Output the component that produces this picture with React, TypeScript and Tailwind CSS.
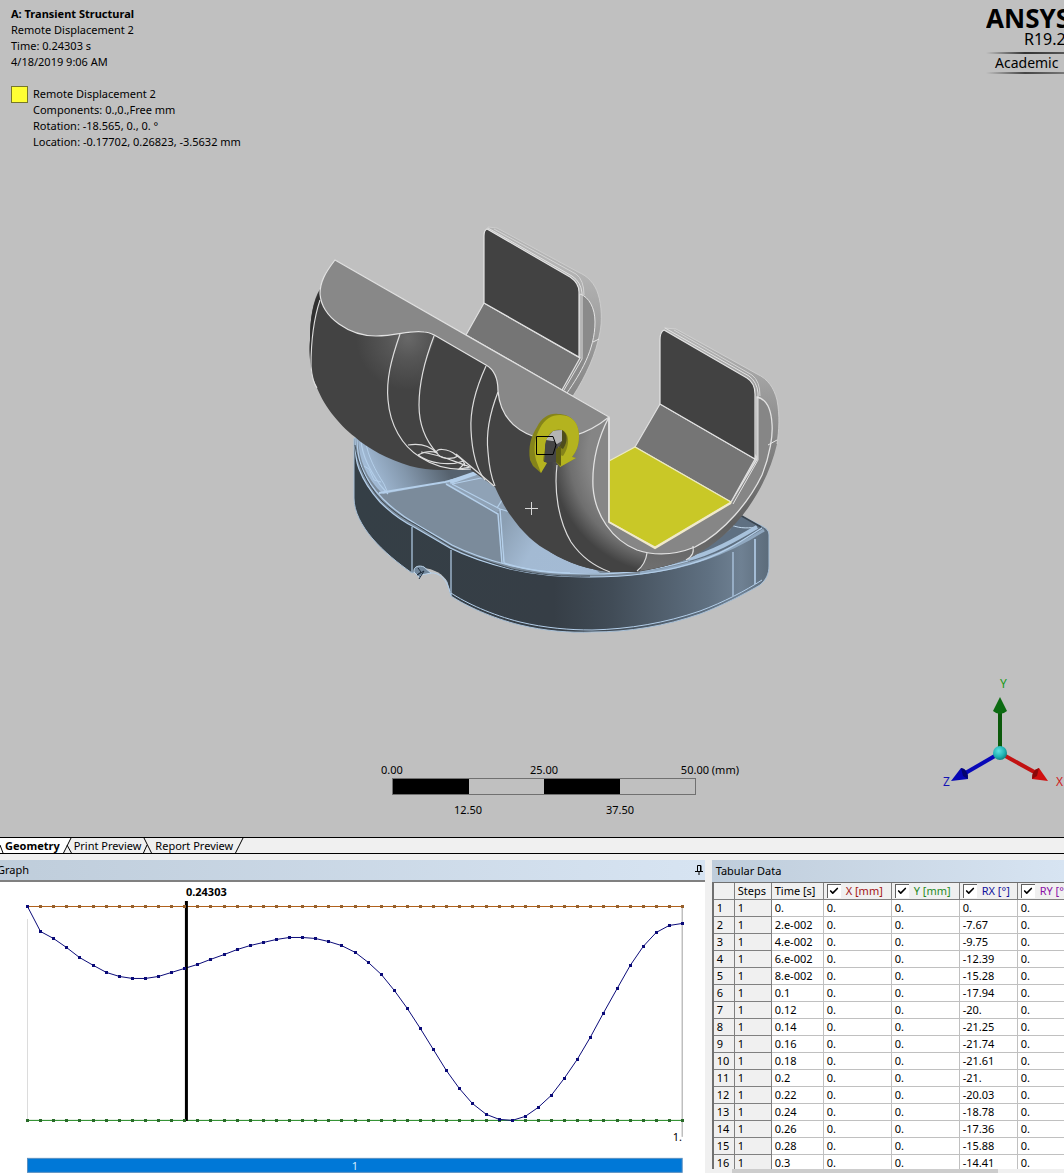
import React, { useState } from 'react';
import { Check } from 'lucide-react';

interface Row {
  time: string;
  rx: string;
}

const rows: Row[] = [
  { time: '0.', rx: '0.' },
  { time: '2.e-002', rx: '-7.67' },
  { time: '4.e-002', rx: '-9.75' },
  { time: '6.e-002', rx: '-12.39' },
  { time: '8.e-002', rx: '-15.28' },
  { time: '0.1', rx: '-17.94' },
  { time: '0.12', rx: '-20.' },
  { time: '0.14', rx: '-21.25' },
  { time: '0.16', rx: '-21.74' },
  { time: '0.18', rx: '-21.61' },
  { time: '0.2', rx: '-21.' },
  { time: '0.22', rx: '-20.03' },
  { time: '0.24', rx: '-18.78' },
  { time: '0.26', rx: '-17.36' },
  { time: '0.28', rx: '-15.88' },
  { time: '0.3', rx: '-14.41' },
];

const channels = [
  { id: 'x', label: 'X [mm]', color: 'text-[#a31515]' },
  { id: 'y', label: 'Y [mm]', color: 'text-[#1f8a1f]' },
  { id: 'rx', label: 'RX [°]', color: 'text-[#10109c]' },
  { id: 'ry', label: 'RY [°]', color: 'text-[#8a10a8]' },
];

// depth of the rotation curve below the zero line, one entry per time step
const curve = [
  0, 25, 32, 41, 51, 59, 66, 70, 72, 72, 70, 66, 62, 58, 53, 48, 43, 39, 36, 33, 31, 31, 32, 35, 39, 46, 56, 68, 84,
  102, 122, 143, 164, 182, 197, 208, 213, 214, 210, 201, 189, 172, 153, 131, 107, 82, 59, 40, 26, 19, 17,
];

const stepX = (i: number) => Math.round(27 + i * 13.1);

const Annotation = () => (
  <div className="pl-[11px] text-[11px] leading-4">
    <div className="font-bold">A: Transient Structural</div>
    <div>Remote Displacement 2</div>
    <div>Time: 0.24303 s</div>
    <div>4/18/2019 9:06 AM</div>
    <div className="mt-4 flex gap-[5px]">
      <span className="h-[17px] w-[17px] border border-[#77772a] bg-[#ffff33]" />
      <div>
        <div>Remote Displacement 2</div>
        <div>Components: 0.,0.,Free mm</div>
        <div>Rotation: -18.565, 0., 0. °</div>
        <div>Location: -0.17702, 0.26823, -3.5632 mm</div>
      </div>
    </div>
  </div>
);

const Logo = () => (
  <div className="w-[78px] overflow-hidden whitespace-nowrap">
    <div className="text-[26px] font-bold leading-6">ANSYS</div>
    <div className="pl-[38px] text-[16px] leading-[18px]">R19.2</div>
    <div className="mt-1 h-[2px] bg-linear-to-r from-transparent via-[#333] to-[#555]" />
    <div className="pl-[9px] text-[14px] leading-[18px]">Academic</div>
    <div className="h-[2px] bg-linear-to-r from-transparent via-[#444] to-[#777]" />
  </div>
);

const Model = () => (
  <svg viewBox="304 222 480 420" className="mx-auto h-[420px] w-[480px]" fill="none">
    <defs>
      <linearGradient id="side" gradientUnits="userSpaceOnUse" x1="354" y1="0" x2="770" y2="0">
        <stop offset="0" stopColor="#353f46" />
        <stop offset="0.48" stopColor="#363e46" />
        <stop offset="0.62" stopColor="#414c57" />
        <stop offset="0.85" stopColor="#5f7081" />
        <stop offset="0.93" stopColor="#6f8193" />
        <stop offset="1" stopColor="#5b6b7a" />
      </linearGradient>
      <linearGradient id="bowlLeft" gradientUnits="userSpaceOnUse" x1="370" y1="490" x2="440" y2="455">
        <stop offset="0" stopColor="#a9c3df" />
        <stop offset="0.5" stopColor="#8397ac" />
        <stop offset="1" stopColor="#56626e" />
      </linearGradient>
      <linearGradient id="bowlRight" gradientUnits="userSpaceOnUse" x1="505" y1="520" x2="600" y2="575">
        <stop offset="0" stopColor="#8b9fb3" />
        <stop offset="0.35" stopColor="#a3bad3" />
        <stop offset="1" stopColor="#a4bbd5" />
      </linearGradient>
      <radialGradient id="roller" gradientUnits="userSpaceOnUse" cx="670" cy="455" r="132">
        <stop offset="0.62" stopColor="#858585" />
        <stop offset="0.76" stopColor="#6f6f6f" />
        <stop offset="0.9" stopColor="#434343" />
      </radialGradient>
      <radialGradient id="sheen" gradientUnits="userSpaceOnUse" cx="408" cy="338" r="52">
        <stop offset="0" stopColor="#686868" />
        <stop offset="0.4" stopColor="#565656" />
        <stop offset="1" stopColor="#434343" />
      </radialGradient>
      <linearGradient id="band" gradientUnits="userSpaceOnUse" x1="0" y1="340" x2="0" y2="570">
        <stop offset="0" stopColor="#b4b4b4" />
        <stop offset="0.35" stopColor="#8f8f8f" />
        <stop offset="0.8" stopColor="#606060" />
        <stop offset="1" stopColor="#6f6f6f" />
      </linearGradient>
      <linearGradient id="bandBack" gradientUnits="userSpaceOnUse" x1="0" y1="270" x2="0" y2="395">
        <stop offset="0" stopColor="#b4b4b4" />
        <stop offset="1" stopColor="#868686" />
      </linearGradient>
    </defs>

    {/* tray */}
    <path
      d="M354 438V498C354 512 362 526 372 538C384 552 398 563 412 573C424 566 442 572 447 582L451 596C466 606 492 618 520 625C545 631 570 633 592 632C630 632 665 626 700 614C724 605 750 591 760 585C766 580 769 574 769 566V535C769 529 764 527 758 524L740 515L600 470L400 440Z"
      fill="url(#side)"
      stroke="#a9c1d8"
      strokeWidth="1"
    />
    <path
      d="M355 438C355 452 356 462 359 469C364 482 371 492 380 502C391 513 402 521 414 527L450 548C470 558 490 564 510 569C540 576 565 577 590 577C630 577 660 573 690 564C720 556 742 541 762 528L740 515L600 460Z"
      fill="#7b8b9b"
    />
    <path d="M358 438C359 460 366 478 383 494L444 483L490 472L440 466L370 440Z" fill="url(#bowlLeft)" />
    <path d="M444 483L490 472L507 508L497 512Z" fill="#8fa2b6" />
    <path d="M501 508C502 530 504 550 504 563C530 571 560 575 600 573L560 545L520 508Z" fill="url(#bowlRight)" />
    <path d="M690 559L730 530L740 515L762 527C740 542 722 553 690 562Z" fill="#5f7082" />
    <path d="M740 515L761 527" stroke="#39444f" strokeWidth="1.500" />
    <path d="M731 525C741 529 750 528 757 527" stroke="#c4daee" />
    <path d="M688 559C712 553 735 540 757 527" stroke="#a8c2dc" strokeWidth="4" />
    <path d="M640 573C680 569 722 557 764 530" stroke="#90a8c0" strokeWidth="3" />
    <g stroke="#b4cfea" strokeWidth="1.200">
      <path d="M355 438C355 452 356 462 359 469C364 482 371 492 380 502C391 513 402 521 414 527L450 548C470 558 490 564 510 569C540 576 565 577 590 577C630 577 660 573 690 564C720 556 742 541 762 528" />
      <path d="M357 438C357 452 359 460 362 468C367 480 374 490 383 499C394 510 404 517 416 524L452 545C472 555 492 561 512 566C540 572 565 574 590 574C630 574 655 570 688 561" />
      <path d="M361 440C362 456 370 470 380 485L388 494" />
      <path d="M366 443C368 456 375 470 384 484L387 491" strokeWidth="1" />
      <path d="M364 466L369 469L374 480L381 482" strokeWidth="1" />
      <path d="M379 493L445 482L484 472" strokeWidth="2" />
      <path d="M446 484L498 514L502 563" strokeWidth="1.500" />
      <path d="M452 484L500 509L510 512" />
      <path d="M452 484L486 477" />
      <path d="M450 482L482 471" strokeWidth="4" />
      <path d="M500 509L504 563C525 570 545 573 570 573" strokeWidth="1.500" />
      <path d="M497 508L502 500" />
      <path d="M412 527V572" />
      <path d="M451 550V596" />
      <path d="M733 552V596" />
      <path d="M755 539V584" strokeWidth="1.600" />
      <path d="M451 593C466 603 492 615 520 622C545 628 570 630 592 630C630 629 665 623 700 611C724 602 745 591 762 580" strokeWidth="1" />
    </g>
    <path
      d="M355 445C357 462 366 484 382 501C394 512 404 519 416 525L452 547C472 557 492 563 512 569C540 575 565 577 590 576"
      stroke="#2d363e"
      strokeWidth="0.800"
    />
    <path d="M414 571C424 564 443 572 447 582L450 600L420 582Z" fill="#c0c0c0" />
    <path d="M414 572C413 566 420 565 424 567L431 573L421 575L420 578Z" fill="#71869a" stroke="#bcd4ea" strokeWidth="1" />
    <path d="M418 568L421 572L417 575L424 571L419 579" stroke="#1d2b3a" />
    <path d="M430 573C440 572 447 580 450 592" stroke="#b4cfea" />

    {/* rear arm */}
    <path
      d="M484 234L488 227L497 228L578 272C588 276 595 284 598 294C602 306 602 322 600 332C596 354 586 376 573 396L560 390L578 350V290L570 278Z"
      fill="url(#bandBack)"
      stroke="#d0d0d0"
      strokeWidth="0.800"
    />
    <path d="M580 294C589 297 595 308 595 322C595 350 580 374 567 393L560 388L580 358Z" fill="#8a8a8a" stroke="#e4e4e4" strokeWidth="1" />
    <path d="M484 303L580 358L562 390L466 335Z" fill="#757575" stroke="#e0e0e0" strokeWidth="1.200" />
    <path d="M484 303V236Q484 230 487 229L570 277Q579 283 579 292V357Z" fill="#424242" stroke="#e4e4e4" strokeWidth="1.200" />
    <path d="M488 228L572 276Q581 282 582 293V359L564 390" stroke="#e0e0e0" />
    <path d="M494 229L576 274Q584 280 584 295" stroke="#d4d4d4" />
    <path d="M593 342L599 339" stroke="#e6e6e6" />

    {/* condyle body */}
    <path
      d="M320 289C313 300 310 318 310 340C309 362 311 376 316 385C322 403 338 424 355 437C368 449 388 459 410 466C428 471 448 471 468 468L495 487C500 498 505 508 511 516C522 532 536 545 550 552C568 563 590 570 610 572H637C665 568 684 560 695 555L700 510L609 500V417L335 260Z"
      fill="#434343"
    />
    <path d="M320 291C313 302 310 318 310 340C309 350 310 356 310 360C312 338 315 315 320 300Z" fill="#303030" />
    <path d="M320 300C315 315 311 340 311 366C312 378 314 384 317 388" stroke="#dedede" strokeWidth="1.100" />
    <path d="M355 334L376 336L400 334L424 332L436 336L424 367C420 376 420 385 420 392H362Z" fill="url(#sheen)" />
    <path
      d="M540 437C565 440 590 434 609 417V520L657 554L695 545V555C684 560 665 568 637 571L610 572C590 570 568 563 550 552C540 520 545 480 552 462Z"
      fill="url(#roller)"
    />
    <path
      d="M335 260C325 273 320 282 320 294C322 318 350 336 376 336C398 336 408 330 424 332C429 332 432 334 436 336L486 365C495 370 498 380 498 391C500 416 515 430 535 437C562 443 588 434 609 417Z"
      fill="#888888"
      stroke="#e2e2e2"
      strokeWidth="1.200"
    />

    {/* right arm */}
    <path
      d="M660 336L664 328L676 329L757 374C768 379 774 388 777 400C780 416 779 432 777 444C772 466 762 488 748 508C732 530 715 545 692 557C675 564 660 568 640 571L647 553L720 530L760 460Z"
      fill="url(#band)"
    />
    <path d="M664 328L676 329L757 374C768 379 774 388 777 400C780 416 779 430 777 444" stroke="#d4d4d4" strokeWidth="0.800" />
    <path
      d="M609 417C597 440 592 465 593 487C595 515 612 540 637 550C655 556 675 555 695 547C725 532 750 500 762 475C770 455 773 435 772 424C771 407 766 399 757 397V459L731 502L655 547L609 522Z"
      fill="#868686"
      stroke="#e2e2e2"
      strokeWidth="1.300"
    />
    <path d="M660 404L755 459L731 502L635 447Z" fill="#757575" stroke="#e0e0e0" strokeWidth="1.200" />
    <path d="M660 404V340Q660 332 664 330L747 378Q755 383 755 394V459Z" fill="#424242" stroke="#e4e4e4" strokeWidth="1.200" />
    <path d="M665 328L749 376Q757 382 758 393V460L733 504" stroke="#e2e2e2" />
    <path d="M674 330L752 375Q760 381 760 396" stroke="#d4d4d4" />
    <path d="M609 461L635 447L731 502L655 547L609 522Z" fill="#c9c827" stroke="#eceac0" strokeWidth="1.200" />
    <path d="M609 522L655 548L731 503" stroke="#f0e9cc" strokeWidth="2" />
    <path d="M609 418V522" stroke="#e4e4e4" strokeWidth="1.500" />
    <path d="M768 445L777 440" stroke="#e6e6e6" />

    {/* edges */}
    <g stroke="#dedede" strokeWidth="1.200">
      <path d="M400 334C391 360 386 380 388 400C390 425 402 446 420 457C432 465 448 471 471 469" />
      <path d="M434 336C424 362 419 385 419 405C419 425 425 440 437 453" />
      <path d="M486 366C475 390 470 412 471 430C472 452 477 470 485 480" />
      <path d="M498 392C489 415 486 435 488 452C489 466 491 477 495 486" />
      <path d="M557 465C554 490 558 520 571 542C582 558 596 567 610 572" />
      <path d="M647 553C646 561 642 567 637 571" />
      <path d="M693 546C694 552 693 556 686 560" />
      <path d="M408 445C420 443 430 446 437 453C430 450 422 453 418 455" />
      <path d="M437 453C434 448 448 448 456 455C462 459 466 464 464 466" />
      <path d="M437 453C440 459 452 460 458 456" />
      <path d="M418 455C430 464 450 466 464 461" />
      <path d="M421 452C438 454 450 460 470 467L459 469L465 463" />
      <path d="M456 454L494 486" />
    </g>

    {/* rotation symbol */}
    <path
      d="M537 427C542 417 550 413 558 414C572 414 579 424 579 436C579 446 576 452 572 457L576 458L560 467L556 462V446L562 448C567 440 566 432 560 430C552 429 547 436 545 444V460L541 473L533 466L530 460C528 447 531 436 537 427Z"
      fill="#85841a"
    />
    <path
      d="M540 428C545 419 551 415 560 415C573 415 579 424 579 436C579 446 576 452 572 457L576 458L560 467V455L563 456C569 448 571 434 562 430C552 427 545 437 545 448C544 454 543 459 543 461L547 463L541 473L536 460C533 447 535 437 540 428Z"
      fill="#b4b31f"
    />
    <path d="M546 440L553 431L562 430V441L557 444L552 441Z" fill="#b4b4b4" />
    <path d="M546 441H554L558 447V462H544Z" fill="#464646" />
    <path d="M562 430C568 433 568 442 563 449L559 447L562 441Z" fill="#4e4d1c" />
    <path d="M556 449L561 446V466L556 462Z" fill="#5f5e14" />
    <path d="M536.500 436.500H553L556 445L553 454.500H536.500Z" stroke="#000000" strokeWidth="1" />
    <path d="M525 508.500H538M531.500 502V515" stroke="#d8d8d8" />
  </svg>
);

const segments = ['bg-black', 'bg-transparent', 'bg-black', 'bg-transparent'];

const ScaleBar = () => (
  <div className="mt-[88px] w-[304px] text-[11px] leading-4">
    <div className="-mx-[11px] flex justify-between whitespace-nowrap">
      <span className="w-0 grow">0.00</span>
      <span>25.00</span>
      <span className="flex w-0 grow justify-end">
        <span className="-mr-8">50.00 (mm)</span>
      </span>
    </div>
    <div className="flex h-[17px] border border-[#707070]">
      {segments.map((bg, i) => (
        <span key={i} className={`flex-1 ${bg}`} />
      ))}
    </div>
    <div className="mt-[7px] grid grid-cols-2 text-center">
      <span>12.50</span>
      <span>37.50</span>
    </div>
  </div>
);

const Triad = () => (
  <svg viewBox="940 674 124 120" className="ml-auto h-[120px] w-[124px] overflow-hidden" fontSize="12">
    <defs>
      <radialGradient id="ball" cx="0.4" cy="0.35" r="0.7">
        <stop offset="0" stopColor="#5fe0e0" />
        <stop offset="0.6" stopColor="#22b4b4" />
        <stop offset="1" stopColor="#0d7a7a" />
      </radialGradient>
    </defs>
    <path d="M1000 752V710" stroke="#0b5a0b" strokeWidth="4" />
    <path d="M1000 697L1007 711Q1000 717 993 711Z" fill="#0c6b12" />
    <path d="M1000 753L962 775" stroke="#0808b8" strokeWidth="4" />
    <path d="M951 781L961 768Q968 769 968 779Z" fill="#0606b4" />
    <path d="M961 768Q968 769 968 779L963 776Z" fill="#04046e" />
    <path d="M1000 753L1038 774" stroke="#c21212" strokeWidth="4" />
    <path d="M1048 781L1039 768Q1032 770 1032 779Z" fill="#d01010" />
    <path d="M1039 768Q1032 770 1032 779L1037 776Z" fill="#8a0a0a" />
    <circle cx="1000" cy="753" r="7" fill="url(#ball)" />
    <text x="1000" y="688" fill="#149a14">Y</text>
    <text x="943" y="786" fill="#1414b4">Z</text>
    <text x="1056" y="786" fill="#d02020">X</text>
  </svg>
);

const tabs = ['Geometry', 'Print Preview', 'Report Preview'];
const edges = ['M3 16L11 0M7 7L12 16', 'M3 0L11 16M2 16L6 7', 'M2 16L10 0'];

const TabBar = () => {
  const [active, setActive] = useState('Geometry');
  return (
    <div className="flex h-[17px] shrink-0 border-y border-black bg-[#f0f0f0] text-[11px]">
      <svg viewBox="0 0 5 15" className="h-[15px] w-[5px] bg-white" stroke="#000">
        <path d="M0 7L3 15" />
      </svg>
      {tabs.map((tab, i) => (
        <React.Fragment key={tab}>
          <button
            onClick={() => setActive(tab)}
            className={`leading-[15px] ${active === tab ? 'bg-white font-bold' : ''}`}
          >
            {tab}
          </button>
          <svg viewBox="0 0 14 15" className="h-[15px] w-[14px]" fill="none" stroke="#000">
            {active === tab && <path d="M0 0H11L3 16H0Z" fill="#fff" stroke="none" />}
            <path d={edges[i]} />
          </svg>
        </React.Fragment>
      ))}
    </div>
  );
};

const Graph = () => (
  <svg viewBox="0 0 705 291" className="w-full bg-white" fontSize="11">
    <path d="M27.500 37V238" stroke="#dcdcdc" />
    <path d="M682.500 24V255" stroke="#a0a0a0" />
    <path d="M27 24.500H683" stroke="#b0601a" />
    <path d="M27 238.500H683" stroke="#1a861a" />
    <polyline points={curve.map((v, i) => `${stepX(i) + 0.5},${v + 24.5}`).join(' ')} fill="none" stroke="#0a0a78" />
    <path d="M186.500 19V239" stroke="#000" strokeWidth="3" />
    {curve.map((v, i) => (
      <g key={i} shapeRendering="crispEdges">
        <rect x={stepX(i) - 1} y={23} width={3} height={3} fill="#96602c" />
        <rect x={stepX(i) - 1} y={237} width={3} height={3} fill="#2a6a2a" />
        <rect x={stepX(i) - 1} y={v + 23} width={3} height={3} fill="#0a0a78" />
      </g>
    ))}
    <text x="186" y="14" fontWeight="bold">0.24303</text>
    <text x="673" y="259">1.</text>
    <rect x="27.500" y="276.500" width="655" height="14" fill="#0078d7" stroke="#5a8fc0" />
    <text x="352" y="288" fill="#d6ecff">1</text>
  </svg>
);

const headCell = 'h-[17px] border-r border-b border-[#808080] bg-[#f0f0f0] p-0 pl-[3px] text-left font-normal';
const cell = 'h-[17px] border-r border-b border-[#c0c0c0] p-0 pl-[3px]';

const DataTable = () => (
  <table className="w-[370px] table-fixed border-separate border-spacing-0 text-[11px] leading-4">
    <colgroup>
      <col className="w-[21px]" />
      <col className="w-[37px]" />
      <col className="w-[52px]" />
      <col className="w-[68px]" />
      <col className="w-[68px]" />
      <col className="w-[58px]" />
      <col />
    </colgroup>
    <thead>
      <tr className="whitespace-nowrap">
        <th className={headCell} />
        <th className={headCell}>Steps</th>
        <th className={headCell}>Time [s]</th>
        {channels.map(c => (
          <th key={c.id} className={headCell}>
            <label className="flex h-4 items-center gap-[5px]">
              <span className="grid">
                <input
                  type="checkbox"
                  defaultChecked
                  className="peer h-[14px] w-[14px] appearance-none border-t border-l border-[#606060] bg-white [grid-area:1/1]"
                />
                <Check
                  size={10}
                  strokeWidth={4}
                  className="pointer-events-none invisible place-self-center [grid-area:1/1] peer-checked:visible"
                />
              </span>
              <span className={c.color}>{c.label}</span>
            </label>
          </th>
        ))}
      </tr>
    </thead>
    <tbody>
      {rows.map((row, i) => (
        <tr key={row.time}>
          <th className={headCell}>{i + 1}</th>
          <td className={headCell}>1</td>
          <td className={cell}>{row.time}</td>
          <td className={cell}>0.</td>
          <td className={cell}>0.</td>
          <td className={cell}>{row.rx}</td>
          <td className={cell}>0.</td>
        </tr>
      ))}
    </tbody>
  </table>
);

export default function App() {
  return (
    <div className="flex h-screen flex-col overflow-hidden bg-[#f0f0f0] font-['Noto_Sans',sans-serif] text-black">
      <section className="min-h-0 flex-1 overflow-hidden bg-[#c0c0c0] pt-[6px]">
        <div className="flex justify-between">
          <Annotation />
          <Logo />
        </div>
        <div className="mt-[72px] pl-6">
          <Model />
        </div>
        <div className="mt-8 grid grid-cols-[1fr_auto_1fr] pl-6">
          <span />
          <ScaleBar />
          <Triad />
        </div>
      </section>

      <TabBar />

      <div className="flex h-[319px] shrink-0 gap-[7px] pt-[6px]">
        <section className="flex min-w-0 flex-[2] flex-col bg-white">
          <h2 className="flex h-[22px] shrink-0 items-center justify-between border-b-2 border-[#808080] bg-linear-to-r from-[#bfcddb] to-[#d7e4f2] pr-[2px] text-[11px]">
            <span className="-ml-[3px]">Graph</span>
            <svg viewBox="0 0 8 10" className="h-[10px] w-2" fill="none" stroke="#000">
              <path d="M2.500 6V0.500H6V6M5.500 0V6M0 6.500H8M4 7V10" />
            </svg>
          </h2>
          <Graph />
        </section>
        <section className="flex min-w-0 flex-1 flex-col overflow-hidden">
          <h2 className="flex h-[22px] shrink-0 items-center bg-linear-to-r from-[#bfcddb] to-[#d7e4f2] pl-1 text-[11px]">
            Tabular Data
          </h2>
          <div className="min-h-0 flex-1 overflow-hidden border-t border-l-2 border-[#707070] bg-white">
            <DataTable />
          </div>
          <div className="h-1 shrink-0 pl-5">
            <div className="h-full w-4/5 bg-[#cdcdcd]" />
          </div>
        </section>
      </div>
    </div>
  );
}
